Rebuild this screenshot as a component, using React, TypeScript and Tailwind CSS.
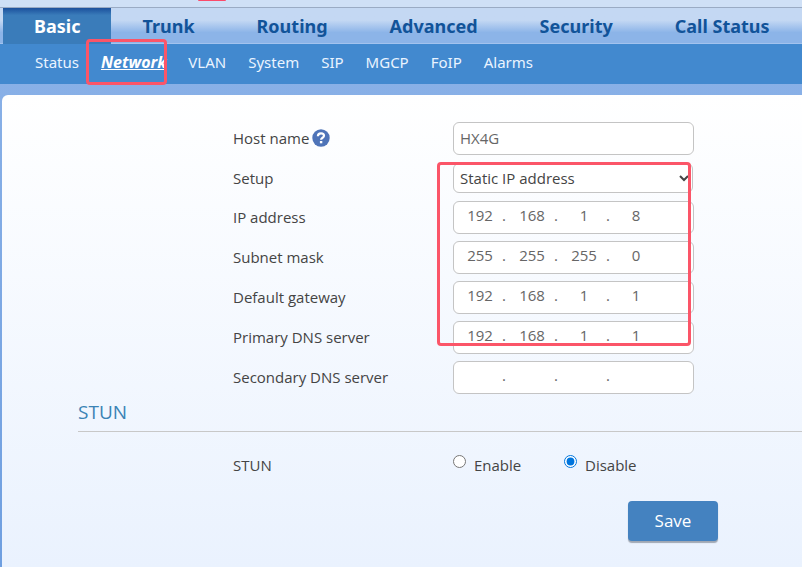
import React from 'react';

const tabs = ['Basic', 'Trunk', 'Routing', 'Advanced', 'Security', 'Call Status'];

const subTabs = ['Status', 'Network', 'VLAN', 'System', 'SIP', 'MGCP', 'FoIP', 'Alarms'];

const addressRows = [
  { id: 'ip', label: 'IP address', octets: ['192', '168', '1', '8'] },
  { id: 'mask', label: 'Subnet mask', octets: ['255', '255', '255', '0'] },
  { id: 'gateway', label: 'Default gateway', octets: ['192', '168', '1', '1'] },
  { id: 'dns1', label: 'Primary DNS server', octets: ['192', '168', '1', '1'] },
  { id: 'dns2', label: 'Secondary DNS server', octets: ['', '', '', ''] },
];

const HelpIcon: React.FC = () => (
  <svg width="18" height="18" viewBox="0 0 18 18" className="shrink-0">
    <circle cx="9" cy="9" r="8.7" fill="#4f74b8" />
    <path d="M5.9 7.3C5.9 5.2 7.2 4.3 9 4.3s3 .9 3 2.5c0 2-2.9 1.9-2.9 4" fill="none" stroke="#fff" strokeWidth="2.2" />
    <rect x="7.9" y="12" width="2.4" height="2.3" fill="#fff" />
  </svg>
);

interface AddressRowProps {
  id: string;
  label: string;
  octets: string[];
}

const AddressRow: React.FC<AddressRowProps> = ({ id, label, octets }) => (
  <div className="flex h-10 items-center">
    <label htmlFor={`${id}-0`} className="w-[220px] shrink-0">{label}</label>
    <div className="flex h-[33px] w-[241px] rounded-md border border-[#c4c4c4] bg-white px-[7px] pb-1 text-[#666]">
      {octets.map((octet, i) => (
        <React.Fragment key={i}>
          {i > 0 && <span className="w-[14px] shrink-0 pl-[3px] leading-[27px]">.</span>}
          <input
            id={`${id}-${i}`}
            aria-label={`${label} part ${i + 1}`}
            defaultValue={octet}
            maxLength={3}
            className="h-[27px] w-[38px] shrink-0 bg-transparent text-center outline-none"
          />
        </React.Fragment>
      ))}
    </div>
  </div>
);

const App: React.FC = () => {
  return (
    <div className="flex min-h-screen flex-col overflow-x-hidden bg-linear-to-b from-[#8db3e8] to-[#6f9fe0] font-['Open_Sans','Noto_Sans',sans-serif] text-[15px] leading-5 text-[#444]">
      <div className="relative h-2 border-b border-[#9aabc4] bg-[#cfe0f6]">
        <span className="absolute top-0 left-[198px] h-px w-7 rounded-b bg-[#fb4a6a]" />
      </div>

      {/* Main tabs */}
      <nav className="flex h-9 border-b border-[#a3c3ee] bg-linear-to-b from-[#c4d8f3] from-35% to-[#8cb4e8] to-70% pl-[3px] font-['Noto_Sans',sans-serif] text-[18px] font-bold">
        {tabs.map((tab) => (
          <a
            key={tab}
            href="#"
            className={`flex h-9 items-center px-[31px] whitespace-nowrap ${
              tab === 'Basic'
                ? 'bg-linear-to-b from-[#1c509c] to-[#3a7cba] to-20% text-white'
                : 'text-[#115399]'
            }`}
          >
            {tab}
          </a>
        ))}
      </nav>

      {/* Sub menu */}
      <nav className="flex h-10 items-center gap-[22px] bg-[#4289cf] pb-1 pl-[35px] font-['Noto_Sans',sans-serif] text-[#eaf4ff]">
        {subTabs.map((tab) =>
          tab === 'Network' ? (
            <a key={tab} href="#" className="relative text-[16px] font-bold text-white italic underline">
              {tab}
              <span className="absolute -top-[13px] -left-[15px] h-[46px] w-[81px] rounded-sm border-3 border-[#fb5568]" />
            </a>
          ) : (
            <a key={tab} href="#">{tab}</a>
          )
        )}
      </nav>

      <main className="mt-[11px] ml-[2px] grow rounded-tl-md bg-linear-to-b from-white to-[#eaf2fe] pt-[23px] pb-6 pl-[76px]">
        <form onSubmit={(e) => e.preventDefault()}>
          <div className="relative pl-[155px]">
            <div className="flex h-10 items-center">
              <div className="flex w-[220px] shrink-0 items-center gap-[3px]">
                <label htmlFor="hostname">Host name</label>
                <HelpIcon />
              </div>
              <input
                id="hostname"
                defaultValue="HX4G"
                className="h-[33px] w-[241px] rounded-md border border-[#c4c4c4] bg-white px-1.5 text-[#666] outline-none"
              />
            </div>
            <div className="flex h-[39px] items-center">
              <label htmlFor="setup" className="w-[220px] shrink-0">Setup</label>
              <select id="setup" className="h-[30px] w-[240px] rounded-md border border-[#c4c4c4] bg-white px-0.5">
                <option>Static IP address</option>
                <option>DHCP</option>
                <option>PPPoE</option>
              </select>
            </div>
            {addressRows.map((row) => (
              <AddressRow key={row.id} {...row} />
            ))}
            <span className="pointer-events-none absolute top-11 left-[359px] h-[184px] w-[254px] rounded-sm border-3 border-[#fb5568]" />
          </div>

          <h2 className="border-b border-[#c8c8c8] pt-[3px] pb-[7px] text-[19px] leading-6 text-[#3b83b5]">STUN</h2>

          <div role="radiogroup" aria-labelledby="stun-label" className="flex items-center pt-[23px] pl-[155px]">
            <span id="stun-label" className="w-[220px] shrink-0">STUN</span>
            <label className="flex w-[111px] items-start gap-2">
              <input type="radio" name="stun" className="size-[13px] accent-[#0075dd]" />
              Enable
            </label>
            <label className="flex items-start gap-2">
              <input type="radio" name="stun" defaultChecked className="size-[13px] accent-[#0075dd]" />
              Disable
            </label>
          </div>

          <div className="pt-[26px] pl-[550px]">
            <button type="submit" className="h-10 w-[90px] rounded-sm bg-[#4482c0] text-[17px] text-white shadow-[0_2px_1px_#a0a8b4]">
              Save
            </button>
          </div>
        </form>
      </main>
    </div>
  );
};

export default App;
